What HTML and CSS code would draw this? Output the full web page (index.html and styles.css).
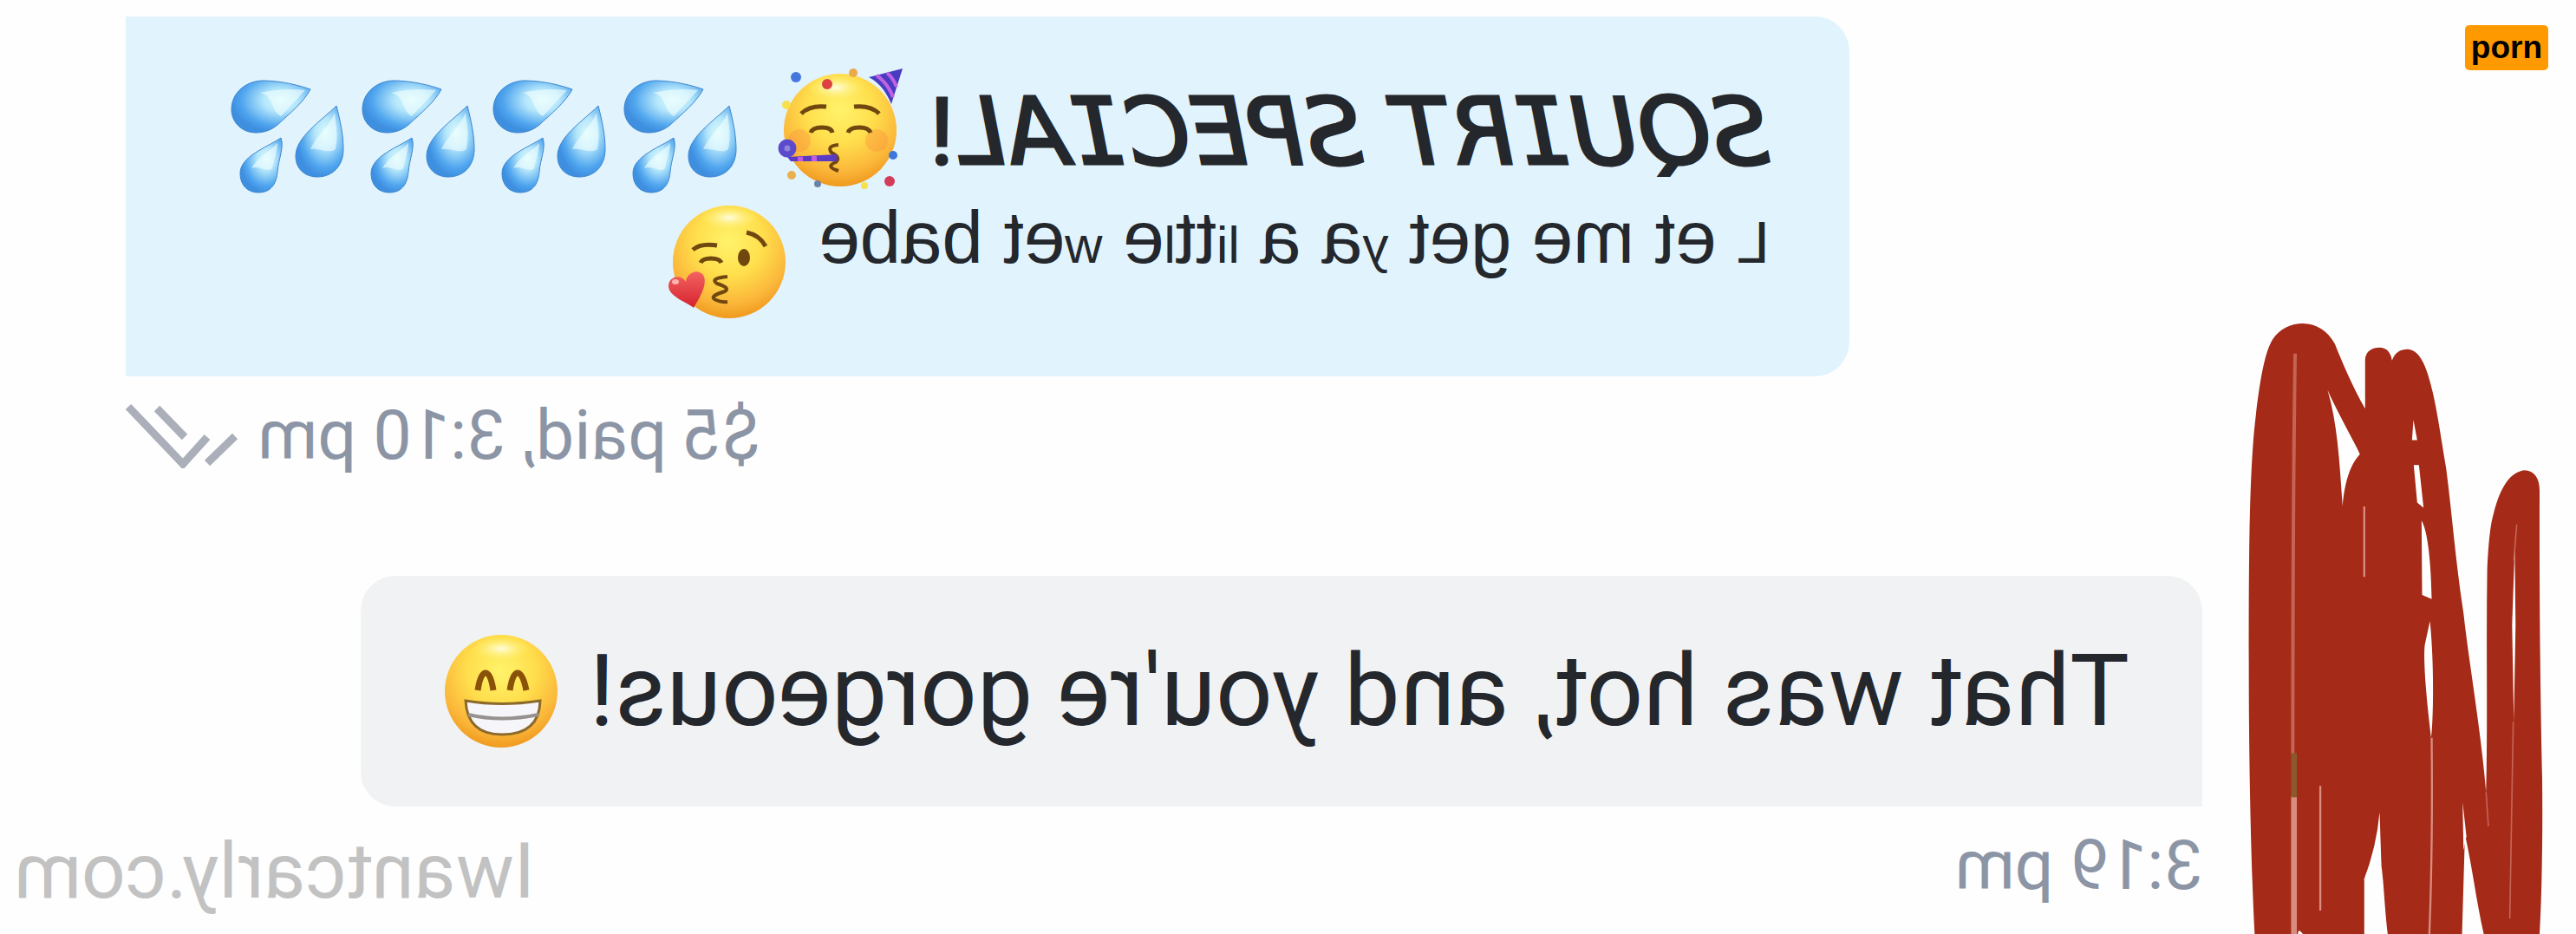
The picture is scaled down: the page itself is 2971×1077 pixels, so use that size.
FILE: index.html
```html
<!DOCTYPE html>
<html lang="en">
<head>
    <meta charset="UTF-8">
    <meta name="viewport" content="width=device-width, initial-scale=1.0">
    <title>Chat</title>
    <link rel="stylesheet" href="styles.css">
</head>
<body>
    <!-- shared emoji shapes -->
    <svg class="defs" aria-hidden="true">
        <defs>
            <radialGradient id="face" cx="50%" cy="32%" r="68%">
                <stop offset="0" stop-color="#fff36b"/>
                <stop offset="0.45" stop-color="#ffde4c"/>
                <stop offset="0.8" stop-color="#fbb73a"/>
                <stop offset="1" stop-color="#ef9a1f"/>
            </radialGradient>
            <radialGradient id="shine">
                <stop offset="0" stop-color="#fffde0"/>
                <stop offset="1" stop-color="#fff36b" stop-opacity="0"/>
            </radialGradient>
            <radialGradient id="water" cx="62%" cy="38%" r="62%">
                <stop offset="0" stop-color="#dcfafa"/>
                <stop offset="0.35" stop-color="#b4e6fb"/>
                <stop offset="0.8" stop-color="#4fa5ee"/>
                <stop offset="1" stop-color="#3f8fe0"/>
            </radialGradient>
            <linearGradient id="heart" x1="0" y1="0" x2="0" y2="1">
                <stop offset="0" stop-color="#f4635f"/>
                <stop offset="1" stop-color="#d42230"/>
            </linearGradient>
            <symbol id="drops" viewBox="22 14 151 152">
                <g fill="url(#water)" stroke="#3d86cf" stroke-width="1">
                    <path d="M118 43C95 35 75 33 62 33C42 34 27 48 27 66C27 82 40 93 55 93C66 93 74 89 80 84C95 70 110 58 118 43Z"/>
                    <path d="M148 62C130 80 101 98 101 120C101 135 112 144 126 144C143 144 156 132 156 112C156 95 152 78 148 62Z"/>
                    <path d="M84 99C68 110 37 120 37 140C37 154 46 162 58 162C74 162 79 150 80 138C81 124 88 110 84 99Z"/>
                </g>
                <path d="M112 44C96 42 78 43 60 47C76 50 72 68 84 74Z" fill="#f2ffff" opacity="0.6"/>
                <path d="M146 70C141 84 124 98 118 112C128 110 140 118 147 112C150 98 148 84 146 70Z" fill="#f2ffff" opacity="0.6"/>
                <path d="M80 105C72 114 56 122 50 134C60 130 68 140 74 134C76 124 80 114 80 105Z" fill="#f2ffff" opacity="0.6"/>
            </symbol>
            <symbol id="party" viewBox="0 0 151 152">
                <circle cx="75" cy="76" r="65" fill="url(#face)"/>
                <ellipse cx="70" cy="27" rx="34" ry="15" fill="url(#shine)"/>
                <circle cx="28" cy="88" r="13" fill="#f98b3c" opacity="0.35"/>
                <circle cx="117" cy="88" r="13" fill="#f98b3c" opacity="0.35"/>
                <path d="M108 15L147 5L134 46C128 32 121 22 108 15Z" fill="#4a3cc0"/>
                <path d="M117 13Q130 22 136 38M129 10Q136 16 140 26" fill="none" stroke="#c062e4" stroke-width="4"/>
                <g fill="none" stroke="#70470f" stroke-width="5">
                    <path d="M30 57Q40 47 59 49M91 49Q110 47 120 57"/>
                    <path d="M41 79Q43 73 54 73Q65 73 66 79M84 79Q86 73 97 73Q108 73 110 79"/>
                    <path d="M73 93Q59 94 65 102Q76 107 70 113Q57 118 73 123" stroke-width="4"/>
                </g>
                <path d="M14 107L71 104V112L18 112Z" fill="#5a3bc4"/>
                <path d="M26 107H32V112H26ZM42 106H48V112H42Z" fill="#c25be0"/>
                <circle cx="14" cy="97" r="7" fill="#8d86d8" stroke="#5b4acb" stroke-width="7"/>
                <circle cx="24" cy="15" r="6" fill="#4576dd"/>
                <circle cx="60" cy="23" r="6" fill="#dc4040"/>
                <circle cx="90" cy="10" r="5" fill="#eba94a"/>
                <circle cx="13" cy="47" r="5" fill="#f7e04b"/>
                <circle cx="136" cy="105" r="5" fill="#3b78dd"/>
                <circle cx="132" cy="135" r="6" fill="#d43d5a"/>
                <circle cx="103" cy="140" r="4" fill="#f7e04b"/>
                <circle cx="49" cy="138" r="4" fill="#6a83a8"/>
                <circle cx="19" cy="128" r="5" fill="#e8b04f"/>
            </symbol>
            <symbol id="kiss" viewBox="0 0 151 152">
                <circle cx="75" cy="76" r="65" fill="url(#face)"/>
                <ellipse cx="75" cy="25" rx="34" ry="14" fill="url(#shine)"/>
                <g fill="none" stroke="#70470f" stroke-width="5">
                    <path d="M33 62Q42 54 61 57M95 42Q110 45 117 58"/>
                    <path d="M42 77Q44 72 54 72Q64 72 66 77"/>
                    <path d="M73 93Q52 95 61 101Q77 106 70 110Q50 116 60 120Q66 123 73 122" stroke-width="4"/>
                </g>
                <ellipse cx="92" cy="71" rx="7" ry="10" fill="#70470f"/>
                <path d="M34 129C28 123 4 116 5 103C6 92 20 90 25 99C26 89 38 83 45 91C51 101 41 117 34 129Z" fill="url(#heart)"/>
                <ellipse cx="13" cy="99" rx="4" ry="3" fill="#ffb3ae"/>
            </symbol>
            <symbol id="grin" viewBox="0 0 132 132">
                <circle cx="66" cy="66" r="65" fill="url(#face)"/>
                <ellipse cx="66" cy="17" rx="34" ry="14" fill="url(#shine)"/>
                <path d="M39 65Q42 45 48 45Q54 45 57 65M76 65Q79 45 85 45Q91 45 95 65" fill="none" stroke="#8a5208" stroke-width="7"/>
                <path d="M25 77Q66 84 111 77Q110 116 67 116Q27 116 25 77Z" fill="#f6f6fa" stroke="#8d6a2c" stroke-width="3"/>
                <path d="M28 93Q66 102 109 93" fill="none" stroke="#97928f" stroke-width="4"/>
            </symbol>
        </defs>
    </svg>

    <main class="chat">
        <div class="bubble sent">
            <div class="line">
                <b class="title">SQU<i>I</i>RT SPEC<i>I</i>AL<span>!</span></b>
                <svg class="emoji"><use href="#party"/></svg>
                <div class="drops">
                    <svg class="emoji"><use href="#drops"/></svg>
                    <svg class="emoji"><use href="#drops"/></svg>
                    <svg class="emoji"><use href="#drops"/></svg>
                    <svg class="emoji"><use href="#drops"/></svg>
                </div>
            </div>
            <div class="line">
                <p class="sub"><span>L</span> et me get <small>y</small>a a <small>li</small>tt<small>l</small>e <small>w</small>et babe</p>
                <svg class="emoji"><use href="#kiss"/></svg>
            </div>
        </div>
        <div class="meta meta-sent">
            <span>$5 paid, 3:10 pm</span>
            <svg class="ticks" viewBox="14 28 132 76"><path d="M17 33L80 99L108 68M50 35L82 68M108 98L140 67"/></svg>
        </div>

        <div class="bubble received">
            <p>That was hot, and you're gorgeous!</p>
            <svg class="emoji grin"><use href="#grin"/></svg>
        </div>
        <div class="meta">3:19 pm</div>

        <div class="watermark">Iwantcarly.com</div>
    </main>

    <!-- marker over the avatar -->
    <svg class="scribble" viewBox="90 50 1025 1518" preserveAspectRatio="none">
        <path fill="#a52a17" d="M118 1568C106 1400 98 1150 98 900C98 650 98 420 122 280C138 180 155 120 180 90C205 62 245 50 285 50C330 50 370 68 395 100C420 145 455 205 500 262V140C502 118 525 110 550 110C572 110 588 120 593 142C603 120 625 113 650 114C695 118 715 165 735 225C755 290 765 350 780 410C800 520 812 640 840 770C860 900 900 1060 918 1215C924 1050 918 850 922 660C926 600 932 550 945 520C970 450 1005 420 1050 415C1085 415 1103 435 1103 465C1102 750 1106 1000 1112 1180C1114 1300 1112 1450 1103 1568H910C885 1490 870 1400 845 1320L835 1568H578C565 1490 565 1430 552 1378C535 1390 515 1410 497 1435V1568H285C275 1560 268 1555 268 1568Z"/>
        <g fill="#fff">
            <path d="M370 215C400 265 445 320 482 375C450 400 430 440 422 505C412 400 405 300 370 215Z"/>
            <path d="M667 290L680 340H662ZM668 402H686L702 508L680 495ZM695 540C712 560 727 620 730 735L697 725ZM724 790C740 900 735 1050 728 1080C715 1000 700 900 706 850Z"/>
            <path d="M550 1265L556 1395L495 1435Q540 1350 550 1265Z"/>
            <path d="M837 1240L850 1325L840 1360Z"/>
            <path d="M1017 610L1020 800L1014 1040L1008 800Z"/>
        </g>
        <g fill="none" stroke="#d98c80" stroke-width="7">
            <path d="M497 505V680M730 1080Q734 1350 722 1568M345 1200V1510"/>
            <path d="M258 125Q250 500 250 1120" stroke-width="12" opacity="0.6"/>
            <path d="M254 1225V1568" stroke-width="20"/>
            <path d="M1024 550L1014 640M1012 1040L1000 1530M918 1215L926 1300" stroke-width="5" opacity="0.6"/>
        </g>
        <path d="M254 1118V1228" stroke="#8a5a2c" stroke-width="20"/>
    </svg>
    <span class="tag">porn</span>
</body>
</html>
```
FILE: styles.css
```css
* {
    box-sizing: border-box;
    margin: 0;
    padding: 0;
}

body {
    position: relative;
    min-height: 100vh;
    overflow: hidden;
    background-color: #fefefe;
    color: #24272c;
    font-family: Roboto, "Liberation Sans", sans-serif;
}

.defs {
    position: absolute;
    width: 0;
    height: 0;
}

/* the whole conversation reads right to left, mirrored */
.chat {
    display: flex;
    flex-direction: column;
    align-items: flex-start;
    min-height: 100vh;
    padding: 19px 145px 0 431px;
    transform: scaleX(-1);
    white-space: nowrap;
}

.bubble {
    border-radius: 40px;
}

.sent {
    align-self: flex-end;
    width: 83%;
    padding: 55px 92px 56px;
    border-radius: 40px 0 0 40px;
    background-color: #e1f3fc;
}

.line {
    display: flex;
    align-items: flex-start;
    gap: 28px;
    height: 152px;
}

.title {
    font-family: "DejaVu Sans", sans-serif;
    font-size: 107px;
    font-weight: normal;
    font-style: oblique;
    line-height: 156px;
    -webkit-text-stroke: 3px #24272c;
}

.title i {
    font-family: "DejaVu Sans Mono", monospace;
}

.title span {
    font-family: Roboto, sans-serif;
    font-style: normal;
    line-height: 1;
}

.sub {
    font-family: "Liberation Sans", sans-serif;
    font-size: 85px;
    line-height: 96px;
}

.sub span {
    font-size: 68px;
    line-height: 1;
}

.sub small {
    font-size: 60px;
    line-height: 1;
}

.emoji {
    flex: none;
    width: 151px;
    height: 152px;
    transform: scaleX(-1);
}

.drops {
    display: flex;
}

.meta {
    margin-top: 20px;
    color: #8c95a5;
    font-size: 79px;
    line-height: 96px;
}

.meta-sent {
    display: flex;
    align-self: flex-end;
    align-items: center;
    gap: 20px;
    margin-bottom: 114px;
}

.ticks {
    width: 132px;
    height: 76px;
    fill: none;
    stroke: #abafba;
    stroke-width: 9px;
    transform: scaleX(-1);
}

.received {
    display: flex;
    align-items: center;
    gap: 36px;
    padding: 67px 96px 67px 84px;
    border-radius: 40px 40px 40px 0;
    background-color: #f0f2f4;
    font-size: 115px;
    line-height: 132px;
}

.grin {
    width: 132px;
    height: 132px;
}

.watermark {
    position: absolute;
    right: 16px;
    bottom: 24px;
    color: #c2c2c2;
    font-size: 89px;
    line-height: 96px;
}

.scribble {
    position: absolute;
    right: 38px;
    bottom: 0;
    width: 342px;
    height: 704px;
}

.tag {
    position: absolute;
    top: 29px;
    right: 32px;
    padding: 0 7px;
    border-radius: 5px;
    background-color: #ff9900;
    color: #000;
    font-family: "Liberation Sans", sans-serif;
    font-size: 37px;
    font-weight: bold;
    line-height: 52px;
}
```
